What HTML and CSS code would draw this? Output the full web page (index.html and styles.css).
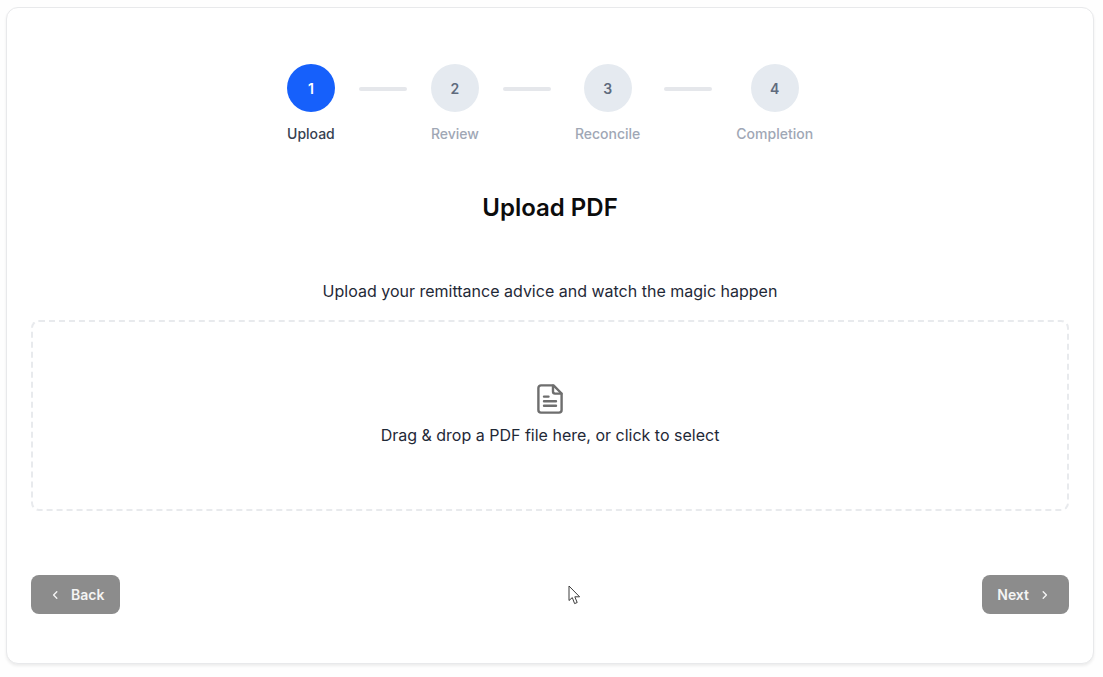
FILE: index.html
```html
<!DOCTYPE html>
<html lang="en">
<head>
<meta charset="utf-8">
<title>Upload PDF</title>
<link rel="stylesheet" href="styles.css">
</head>
<body>
<main class="card">
  <ol class="stepper">
    <li class="step step-active"><span class="dot">1</span><span class="label">Upload</span></li>
    <li class="line"></li>
    <li class="step"><span class="dot">2</span><span class="label">Review</span></li>
    <li class="line"></li>
    <li class="step"><span class="dot">3</span><span class="label">Reconcile</span></li>
    <li class="line"></li>
    <li class="step"><span class="dot">4</span><span class="label">Completion</span></li>
  </ol>
  <h1 class="title">Upload PDF</h1>
  <p class="subtitle">Upload your remittance advice and watch the magic happen</p>
  <section class="dropzone">
    <svg class="file-icon" width="26" height="30" viewBox="0 0 26 30" fill="none" stroke="#6e6e6e" stroke-width="2.4" stroke-linejoin="round" stroke-linecap="round">
      <path d="M4 1.4H16.5L24.6 9.5V26A2.6 2.6 0 0 1 22 28.6H4A2.6 2.6 0 0 1 1.4 26V4A2.6 2.6 0 0 1 4 1.4Z"/>
      <path d="M16 1.6V7.6A2 2 0 0 0 18 9.6H24.4"/>
      <path d="M7 12.6H11.5M7 17.2H19M7 21.8H19"/>
    </svg>
    <p class="drop-text">Drag &amp; drop a PDF file here, or click to select</p>
  </section>
  <div class="actions">
    <button class="btn btn-back" type="button">
      <svg width="16" height="16" viewBox="0 0 16 16" fill="none" stroke="currentColor" stroke-width="1.4" stroke-linecap="round" stroke-linejoin="round"><path d="M9.8 4.8 6.6 8l3.2 3.2"/></svg>
      Back
    </button>
    <button class="btn btn-next" type="button">
      Next
      <svg width="16" height="16" viewBox="0 0 16 16" fill="none" stroke="currentColor" stroke-width="1.4" stroke-linecap="round" stroke-linejoin="round"><path d="M6.2 4.8 9.4 8l-3.2 3.2"/></svg>
    </button>
  </div>
  <svg class="cursor" width="14" height="21" viewBox="0 0 14 21">
    <path d="M1 1V15.5L4.3 12.6L6.6 18.6L9.2 17.5L6.8 11.8H11.6Z" fill="#fff" stroke="#3c3c3c" stroke-width="1" stroke-linejoin="round"/>
  </svg>
</main>
</body>
</html>
```
FILE: styles.css
```css
* {
  box-sizing: border-box;
}

html,
body {
  margin: 0;
  height: 100%;
}

body {
  background: #fefefe;
  padding: 7px 9px 0 6px;
  font-family: Inter, "Liberation Sans", sans-serif;
  color: #111827;
  overflow: hidden;
}

.card {
  position: relative;
  height: 657px;
  padding: 56px 24px 48px;
  background: #fff;
  border: 1px solid #e8e9eb;
  border-radius: 12px;
  box-shadow: 0 2px 3px rgba(0, 0, 0, 0.07);
}

.stepper {
  display: flex;
  justify-content: center;
  align-items: flex-start;
  gap: 24px;
  list-style: none;
  margin: 0;
  padding: 0;
}

.step {
  display: flex;
  flex-direction: column;
  align-items: center;
  gap: 12px;
}

.dot {
  display: flex;
  align-items: center;
  justify-content: center;
  width: 48px;
  height: 48px;
  border-radius: 50%;
  background: #e5eaf0;
  color: #5f6b7d;
  font-size: 14px;
  font-weight: 600;
}

.step-active .dot {
  background: #1660fb;
  color: #fff;
}

.label {
  font-size: 14px;
  line-height: 20px;
  font-weight: 500;
  color: #a0a7b5;
  white-space: nowrap;
}

.step-active .label {
  color: #374151;
}

.line {
  width: 48px;
  height: 4px;
  margin-top: 23px;
  border-radius: 2px;
  background: #e5e7eb;
}

.title {
  margin: 48px 0 0;
  font-size: 24px;
  line-height: 32px;
  font-weight: 600;
  text-align: center;
  color: #0c0c0c;
}

.subtitle {
  margin: 55px 0 0;
  font-size: 16px;
  line-height: 24px;
  text-align: center;
  color: #1f2937;
}

.dropzone {
  display: flex;
  flex-direction: column;
  align-items: center;
  height: 191px;
  margin-top: 17px;
  padding-top: 62px;
  border: 2px dashed #e8eaed;
  border-radius: 8px;
}

.file-icon {
  display: block;
}

.drop-text {
  margin: 9px 0 0;
  font-size: 16px;
  line-height: 24px;
  color: #1f2937;
}

.actions {
  display: flex;
  justify-content: space-between;
  margin-top: 64px;
}

.btn {
  display: flex;
  align-items: center;
  gap: 8px;
  height: 39px;
  padding: 0 16px;
  border: 0;
  border-radius: 8px;
  background: #8c8c8c;
  color: #f4f4f4;
  font-family: inherit;
  font-size: 14px;
  font-weight: 600;
}

.btn-next {
  padding-left: 15px;
}

.cursor {
  position: absolute;
  left: 561px;
  top: 577px;
}
```
